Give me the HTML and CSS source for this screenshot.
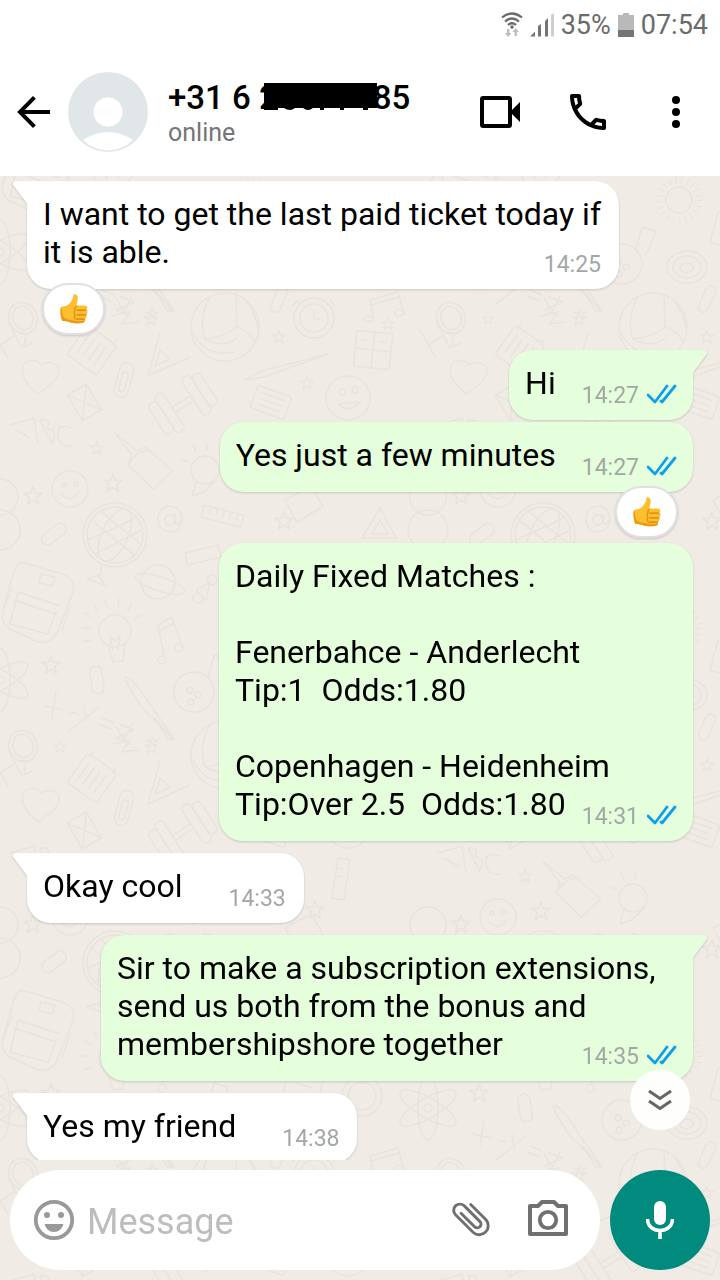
FILE: index.html
```html
<!DOCTYPE html>
<html lang="en">
  <head>
    <meta charset="UTF-8" />
    <meta name="viewport" content="width=device-width, initial-scale=1.0" />
    <title>Chat</title>
    <link rel="stylesheet" href="styles.css" />
  </head>
  <body>
    <!-- shared shapes -->
    <svg class="defs" aria-hidden="true">
      <symbol id="ticks" viewBox="0 0 30 20">
        <path d="M1 11l7 7L20 2M14 17l1 1L28 2" fill="none" stroke="#0f9fe8" stroke-width="2.8" stroke-linecap="round" stroke-linejoin="round" />
      </symbol>
      <symbol id="thumb" viewBox="0 0 28 30">
        <path d="M1 13c3-.5 6-1 8-3 2.500-2.500 4-5 4.500-9 .3-1.500 3-1 3.800 1 1 2.500.2 6-1.300 9.500h8.500c3.500 0 3.600 3.500 1.300 4.300 2.600.9 2.200 4.200-.2 4.600 1.800 1 1.200 4-.9 4.400 1 1.700 0 4-2.700 4.200-5 .5-9 .3-12-.8-3-1-5-1.200-7.500-1.200C.5 24 0 16 1 13z" fill="#fdbf2d" />
        <path d="M1 13c-1 4-.5 11 1.500 14 2.500 0 4.500.2 7.500 1.200 3 1.100 7 1.300 12 .8 1.800-.1 2.900-1.200 3-2.400-5 1.200-9 .8-13-.4C8 25 4 25 3 22c-1-3-.8-6-2-9z" fill="#ec9a12" />
        <path d="M17 16.200h9M17 20.800h9M17 25.200h7.500" fill="none" stroke="#d9820c" stroke-width="1.300" stroke-linecap="round" />
        <path d="M16.500 12c-1.500 1.200-2 2.200-1.500 4-1.500 1.500-1.300 3.500 0 4.500-1 1.500-.8 3.200.5 4.500" fill="none" stroke="#e08e12" stroke-width="1.200" stroke-linecap="round" />
      </symbol>
      <symbol id="star" viewBox="-12 -12 24 24" overflow="visible">
        <path d="M0-10l2.500 7 7.500.2-6 4.500L6 9 0 4.800-6 9l2-7.300-6-4.500 7.500-.2z" />
      </symbol>
    </svg>

    <!-- wallpaper -->
    <svg class="wallpaper" aria-hidden="true">
      <defs>
        <g id="doodles" fill="none" stroke="#e8e3dd" stroke-width="1.500" stroke-linejoin="round" stroke-linecap="round">
          <ellipse cx="23" cy="318" rx="14" ry="16" transform="rotate(-20 23 318)" />
          <ellipse cx="23" cy="318" rx="10" ry="12" transform="rotate(-20 23 318)" />
          <path d="M-8 330l16 28M8 322l14 26M0 345l14-9M20 333q8-2 5 6l-1 8 8-4" />
          <g transform="rotate(35 92 350)"><rect x="74" y="332" width="36" height="36" rx="3" /><path d="M81 340v20M88 340v20M95 340v20M102 340v20M78 328v6M106 328v6" /></g>
          <path d="M38 394C28 386 20 376 23 366c3-7 14-7 18-1 5-4 16-3 18 4 2 9-10 18-21 25z" />
          <path d="M160 333l-12 43 42-19M160 350l-5 16 15-7z" />
          <g transform="rotate(15 124 380)"><rect x="117" y="362" width="14" height="36" rx="7" /><rect x="121" y="372" width="6" height="20" rx="3" /></g>
          <circle cx="225" cy="327" r="34" /><path d="M210 297q-12 20-5 42 20-2 32-12l-1-33M237 327q10 2 18 14M205 339q18 10 32-1M193 333q14 25 40 19M247 302q8 10 11 26" />
          <path d="M245 380l16-9 67-17-64 23z" />
          <g transform="rotate(-33 183 404)"><path d="M173 401h20M173 407h20" /><rect x="162" y="382" width="10" height="44" rx="4" /><rect x="152" y="386" width="10" height="36" rx="4" /><rect x="194" y="382" width="10" height="44" rx="4" /><rect x="204" y="386" width="10" height="36" rx="4" /></g>
          <g transform="rotate(20 270 402)"><rect x="253" y="390" width="36" height="24" rx="3" /><path d="M260 396h22M260 402h22M260 408h22" /></g>
          <circle cx="348" cy="398" r="22" /><circle cx="342" cy="392" r="3" /><circle cx="355" cy="390" r="3" /><path d="M338 404q12 10 22-2z" />
          <g transform="rotate(-30 83 402)"><rect x="73" y="388" width="22" height="30" /><path d="M73 388l22 30M95 388l-22 30" /></g>
          <path d="M10 425l24-7 4 26M16 430l14 8M40 420l12 24M40 420q12-2 7 9 12 1 5 13M72 428q-16-5-14 8 2 12 14 10" />
          <path d="M115 433l22 18 8-4 28 24-20 18-25-24 4-10zM128 465q8-14 20-15" />
          <circle cx="70" cy="489" r="18" /><circle cx="64" cy="485" r="2" /><circle cx="76" cy="484" r="2" /><path d="M61 494q9 10 18-2" />
          <circle cx="115" cy="535" r="32" /><circle cx="115" cy="535" r="28" /><ellipse cx="115" cy="535" rx="13" ry="28" transform="rotate(25 115 535)" /><path d="M91 520l42 34M100 511l42 34M88 540l48-22M95 554l47-24M101 566v8l-14 5 18 6-6-9" />
          <ellipse cx="170" cy="519" rx="12" ry="13" /><circle cx="170" cy="520" r="5" /><path d="M175 514v9q4 3 6-3" />
          <g transform="rotate(14 222 516)"><rect x="202" y="510" width="41" height="12" /><path d="M209 510v6M216 510v6M223 510v6M230 510v6M237 510v6" /></g>
          <circle cx="0" cy="530" r="20" />
          <rect x="40" y="528" width="28" height="12" rx="6" transform="rotate(-38 54 534)" />
          <circle cx="205" cy="470" r="14" /><path d="M196 482l-4 14 12-4 12-12M188 462l-6-3M196 452l-3-7M207 450v-7" />
          <circle cx="314" cy="318" r="20" /><circle cx="314" cy="318" r="14" /><path d="M298 300l-6 6M330 300l5 6M314 310v9h7" />
          <rect x="274" y="285" width="10" height="28" rx="5" transform="rotate(24 279 299)" />
          <g transform="rotate(6 373 350)"><rect x="355" y="332" width="36" height="36" rx="2" /><path d="M355 350h36M373 332v36M361 341h5M380 341h5" /></g>
          <path d="M370 300l28-8 6 22q-8 5-10-2 4-5 10 0M370 300l4 20q-8 4-10-2 4-4 10 0M370 305l29-8" />
          <path d="M155 290l18 22-6-2zM116 298l8 14 8-16M112 316l18-4-8 12 16-2" />
          <path d="M22 562l40 12q14 4 11 18l-15 38q-5 14-20 12L12 630Q0 626 3 610l10-36q3-10 9-12zM18 592l42 14M14 600l42 14M18 592l-8 32 38 10 8-22M41 574l14 3-3 9-13-3zM12 588l-8 20M70 606l-8 24" />
          <ellipse cx="158" cy="582" rx="17" ry="17" /><ellipse cx="160" cy="584" rx="26" ry="7" transform="rotate(18 160 584)" />
          <circle cx="115" cy="631" r="16" /><path d="M108 645l5 17 10-1 2-17M113 650l-3-14 5 5 5-5-2 14M91 617l-6-4M97 610l-3-6M107 607l-2-7M118 606l1-7M128 610l4-6M135 619l7-4M90 628h-8M91 640l-8 2" />
          <path d="M158 625l14-8 10 30M158 625l6 32M158 632l16-9" /><circle cx="162" cy="660" r="4" /><circle cx="179" cy="648" r="4" />
          <ellipse cx="0" cy="680" rx="10" ry="32" /><ellipse cx="0" cy="680" rx="10" ry="32" transform="rotate(60 0 680)" /><ellipse cx="0" cy="680" rx="10" ry="32" transform="rotate(-60 0 680)" /><circle cx="0" cy="680" r="4" />
          <rect x="91" y="666" width="12" height="28" rx="6" transform="rotate(-8 97 680)" />
          <path d="M125 677q8 0 24 26l25 36-31-30q-16-22-18-32z" />
          <path d="M45 706l18 4M56 692l-4 26M70 712l8 2M84 706l2 14M98 708l-30 24M102 718l12 5M99 724l12 5M120 724l14 6-18 8 14 6" />
          <circle cx="194" cy="692" r="20" /><circle cx="190" cy="690" r="3" /><circle cx="198" cy="695" r="3" /><circle cx="191" cy="702" r="3" /><path d="M208 677l6-22 14 4-10 24" />
          <circle cx="251" cy="628" r="13" /><circle cx="251" cy="628" r="20" stroke-dasharray="1 5" stroke-width="7" stroke-linecap="butt" />
          <ellipse cx="259" cy="695" rx="20" ry="16" /><ellipse cx="259" cy="695" rx="14" ry="11" /><path d="M266 697q-10 7-14 0 2-8 12-5z" />
          <path d="M185 553l33-8 3 12-33 8zM196 590l14-8-4 18z" /><circle cx="198" cy="598" r="5" /><circle cx="212" cy="580" r="5" />
          <path d="M380 508l-18 30h34zM380 520l-8 14h16z" /><circle cx="428" cy="497" r="18" />
          <path d="M338 430l12 2-6 40-12-2zM338 440l5 1M337 448l5 1" /><path d="M285 500l26-14 12 20-26 16z" />
          <circle cx="362" cy="668" r="20" /><circle cx="362" cy="668" r="14" />
          <path d="M290 640l34 10-8 30-34-10zM296 655l16 5M400 590l14-20 12 24zM310 560q20-18 34 4l-17 22z" />
          <g stroke-width="1.800">
            <use href="#star" x="143" y="311" width="16" height="16" /><use href="#star" x="271" y="329" width="16" height="16" />
            <use href="#star" x="299" y="375" width="16" height="16" /><use href="#star" x="89" y="440" width="16" height="16" />
            <use href="#star" x="22" y="485" width="22" height="22" /><use href="#star" x="102" y="472" width="22" height="22" />
            <use href="#star" x="273" y="510" width="22" height="22" /><use href="#star" x="304" y="471" width="22" height="22" />
            <use href="#star" x="40" y="654" width="22" height="22" /><use href="#star" x="381" y="317" width="14" height="14" />
            <use href="#star" x="53" y="740" width="14" height="14" /><use href="#star" x="145" y="735" width="14" height="14" />
          </g>
        </g>
        <pattern id="tile" width="428" height="428" patternUnits="userSpaceOnUse">
          <use href="#doodles" /><use href="#doodles" x="428" /><use href="#doodles" x="-428" />
          <use href="#doodles" y="-428" /><use href="#doodles" x="428" y="-428" /><use href="#doodles" x="-428" y="-428" />
        </pattern>
      </defs>
      <rect width="100%" height="100%" fill="url(#tile)" />
    </svg>

    <div class="app">
      <!-- phone status bar -->
      <div class="status-bar">
        <svg class="wifi" viewBox="0 0 22 26" aria-hidden="true">
          <path d="M1 5.500q10-8 20 0M4 9.500q7-6 14 0M7 13q4-3.500 8 0" fill="none" stroke="#6b6b6b" stroke-width="2.200" />
          <circle cx="11" cy="15" r="1.800" fill="#6b6b6b" />
          <path d="M6 17v4H4l3.200 4 3.200-4h-2v-4zM13.500 24v-4h-2l3.200-4 3.200 4h-2v4z" fill="#bdbdbd" />
        </svg>
        <svg class="signal" viewBox="0 0 24 24" aria-hidden="true">
          <path d="M0 23.500l5-5v5zM8 23.500V13l3-2v12.500zM15 23.500V8l3-3v18.500z" fill="#757575" />
          <path d="M21 23.500V2l3-2v23.500z" fill="#cfcfcf" />
        </svg>
        <span>35%</span>
        <svg class="battery" viewBox="0 0 16 24" aria-hidden="true">
          <path d="M5 0h6v2h5v22H0V2h5z" fill="#b9b9b9" />
          <path d="M0 17h16v7H0z" fill="#757575" />
        </svg>
        <span>07:54</span>
      </div>

      <header class="chat-header">
        <button type="button" class="icon-btn" aria-label="Back">
          <svg viewBox="0 0 24 24"><path d="M20 12H5.500M12.200 4.700L5 12l7.200 7.300" fill="none" stroke="#000" stroke-width="2" /></svg>
        </button>
        <svg class="avatar" viewBox="0 0 80 80" aria-hidden="true">
          <circle cx="40" cy="40" r="40" fill="#e1e6e9" />
          <circle cx="40" cy="40" r="14.500" fill="#fff" />
          <path d="M15 68q25-16 50 0-11 10.500-25 10.500T15 68z" fill="#fff" />
        </svg>
        <div class="contact">
          <h1 class="contact-name">+31 6 2<svg class="redacted" viewBox="0 0 113 28" aria-hidden="true"><path d="M0 0h113v25h-9v2h-5v-2H80v2h-4v-2H60v2h-4v-2h-7q-5 4-10 0h-8q-5 4-11 0h-6v2H0z" /></svg>85</h1>
          <p class="contact-status">online</p>
        </div>
        <div class="actions">
          <button type="button" class="icon-btn" aria-label="Video call">
            <svg viewBox="0 0 24 24"><rect x="3" y="5" width="14" height="14" rx=".6" fill="none" stroke="#000" stroke-width="2" /><path d="M18 11l4-4v10l-4-4z" /></svg>
          </button>
          <button type="button" class="icon-btn" aria-label="Call">
            <svg viewBox="0 0 24 24"><path d="M6.540 5c.06.89.21 1.760.45 2.590l-1.200 1.200c-.41-1.200-.67-2.470-.76-3.790h1.510m9.860 12.020c.85.24 1.720.39 2.600.45v1.490c-1.320-.09-2.590-.35-3.800-.75l1.200-1.190M7.500 3H4c-.55 0-1 .45-1 1 0 9.390 7.610 17 17 17 .55 0 1-.45 1-1v-3.490c0-.55-.45-1-1-1-1.240 0-2.450-.2-3.570-.57-.1-.04-.21-.05-.31-.05-.26 0-.51.1-.71.29l-2.200 2.200c-2.830-1.450-5.150-3.760-6.590-6.590l2.200-2.200c.28-.28.36-.67.25-1.020C8.700 6.450 8.500 5.250 8.500 4c0-.55-.45-1-1-1z" /></svg>
          </button>
          <button type="button" class="icon-btn" aria-label="More options">
            <svg viewBox="0 0 24 24"><circle cx="12" cy="6" r="2" /><circle cx="12" cy="12" r="2" /><circle cx="12" cy="18" r="2" /></svg>
          </button>
        </div>
      </header>

      <div class="chat-area">
        <main class="messages">
          <div class="message received tail has-reaction">
            I want to get the last paid ticket today if it is able.
            <span class="meta"><time>14:25</time></span>
            <span class="reaction" role="img" aria-label="Thumbs up"><svg><use href="#thumb" /></svg></span>
          </div>

          <div class="message sent tail first">
            Hi
            <span class="meta"><time>14:27</time><svg class="ticks"><use href="#ticks" /></svg></span>
          </div>

          <div class="message sent has-reaction">
            Yes just a few minutes
            <span class="meta"><time>14:27</time><svg class="ticks"><use href="#ticks" /></svg></span>
            <span class="reaction" role="img" aria-label="Thumbs up"><svg><use href="#thumb" /></svg></span>
          </div>

          <div class="message sent long">
            Daily Fixed Matches :<br />
            <br />
            Fenerbahce - Anderlecht<br />
            Tip:1&nbsp; Odds:1.80<br />
            <br />
            Copenhagen - Heidenheim<br />
            Tip:Over 2.5&nbsp; Odds:1.80
            <span class="meta"><time>14:31</time><svg class="ticks"><use href="#ticks" /></svg></span>
          </div>

          <div class="message received tail first">
            Okay cool
            <span class="meta"><time>14:33</time></span>
          </div>

          <div class="message sent tail first">
            Sir to make a subscription extensions, send us both from the bonus and membershipshore together
            <span class="meta"><time>14:35</time><svg class="ticks"><use href="#ticks" /></svg></span>
          </div>

          <div class="message received tail first">
            Yes my friend
            <span class="meta"><time>14:38</time></span>
          </div>
        </main>

        <button type="button" class="scroll-down" aria-label="Scroll to bottom">
          <svg viewBox="0 0 24 20"><path d="M1 1l11 7.500L23 1M1 11l11 7.500L23 11" fill="none" stroke="#666" stroke-width="3" /></svg>
        </button>
      </div>

      <form class="composer">
        <div class="composer-box">
          <button type="button" class="icon-btn" aria-label="Emoji">
            <svg viewBox="0 0 24 24"><circle cx="12" cy="12" r="9.100" fill="none" stroke="#999" stroke-width="1.900" /><circle cx="8.500" cy="9.500" r="1.500" fill="#999" /><circle cx="15.500" cy="9.500" r="1.500" fill="#999" /><path d="M7.300 14h9.400c-.6 2.400-2.400 4-4.700 4s-4.100-1.600-4.700-4z" fill="#999" /></svg>
          </button>
          <input type="text" class="composer-input" placeholder="Message" aria-label="Message" />
          <button type="button" class="icon-btn" aria-label="Attach">
            <svg viewBox="0 0 48 48"><path d="M23.700 8.500L39 23.800A9 9 0 0 1 26.300 36.500L8.500 18.700A6.200 6.200 0 0 1 17.300 9.900L33 25.600A3.750 3.750 0 0 1 27.700 30.900L14 17.200" fill="none" stroke="#707070" stroke-width="2.900" stroke-linecap="round" /></svg>
          </button>
          <button type="button" class="icon-btn" aria-label="Camera">
            <svg viewBox="0 0 48 48"><path d="M6 10h8l4-4h12l4 4h8v28H6z" fill="none" stroke="#707070" stroke-width="4" stroke-linejoin="round" /><circle cx="24" cy="24" r="8.200" fill="none" stroke="#707070" stroke-width="3.800" /></svg>
          </button>
        </div>
        <button type="button" class="mic-btn" aria-label="Record voice message">
          <svg viewBox="0 0 28 38"><rect x="8" y="0" width="12" height="24" rx="6" fill="#fff" /><path d="M1.500 18c0 7 5.500 11.500 12.500 11.500S26.500 25 26.500 18M14 29v9" fill="none" stroke="#fff" stroke-width="3.600" /></svg>
        </button>
      </form>
    </div>
  </body>
</html>
```

FILE: styles.css
```css
* {
  box-sizing: border-box;
}

body {
  margin: 0;
  background-color: #f0ebe5;
  font-family: Roboto, "Liberation Sans", sans-serif;
  color: #000;
}

button {
  padding: 0;
  border: none;
  background: none;
  cursor: pointer;
}

svg {
  display: block;
}

.defs {
  position: absolute;
  width: 0;
  height: 0;
}

/* doodle pattern behind everything */
.wallpaper {
  position: fixed;
  top: 0;
  left: 0;
  width: 100%;
  height: 100%;
}

.app {
  position: relative;
  display: flex;
  flex-direction: column;
  height: 100vh;
}

/* status bar */
.status-bar {
  display: flex;
  align-items: center;
  justify-content: flex-end;
  gap: 7px;
  height: 48px;
  padding: 2px 12px 0 0;
  background-color: #fff;
  color: #6b6b6b;
  font-size: 27px;
}

.wifi {
  width: 22px;
  height: 26px;
}

.signal {
  width: 24px;
  height: 24px;
}

.battery {
  width: 16px;
  height: 24px;
}

/* header */
.chat-header {
  display: flex;
  align-items: center;
  height: 128px;
  padding: 0 20px 0 10px;
  background-color: #fff;
}

.icon-btn {
  flex: none;
  width: 48px;
  height: 48px;
}

.icon-btn svg {
  width: 100%;
  height: 100%;
}

.avatar {
  flex: none;
  width: 80px;
  height: 80px;
  margin: 0 20px 0 10px;
}

.contact {
  flex: 1;
  padding-top: 4px;
}

.contact-name {
  margin: 0;
  font-size: 33px;
  font-weight: 500;
  line-height: 38px;
  white-space: nowrap;
}

/* black bar over part of the number */
.redacted {
  display: inline-block;
  width: 113px;
  height: 28px;
  margin: 0 -4px 0 -14px;
  vertical-align: -2px;
}

.contact-status {
  margin: 0;
  font-size: 25px;
  line-height: 32px;
  color: #757575;
}

.actions {
  display: flex;
  gap: 40px;
}

/* messages */
.chat-area {
  position: relative;
  flex: 1;
  min-height: 0;
}

.messages {
  display: flex;
  flex-direction: column;
  gap: 2px;
  height: 100%;
  padding: 5px 27px 0;
  overflow: hidden;
}

.message {
  position: relative;
  flex: none;
  max-width: calc(100% - 74px);
  padding: 14px 16px 18px;
  border-radius: 24px;
  font-size: 32px;
  line-height: 38px;
  filter: drop-shadow(0 1px 1px rgba(0, 0, 0, 0.16));
}

.received {
  align-self: flex-start;
  padding-right: 18px;
  background-color: #fff;
}

.sent {
  align-self: flex-end;
  background-color: #e5fedb;
}

.first {
  margin-top: 10px;
}

.has-reaction {
  margin-bottom: 49px;
}

.received.tail {
  border-top-left-radius: 0;
}

.sent.tail {
  border-top-right-radius: 0;
}

.tail::before {
  content: "";
  position: absolute;
  top: 0;
  width: 15px;
  height: 24px;
  background-color: inherit;
  clip-path: path("M15 0H3C0 0 -1 3 1 5L15 24Z");
}

.received.tail::before {
  left: -14px;
}

.sent.tail::before {
  right: -14px;
  transform: scaleX(-1);
}

/* time and ticks hang a little below the last line */
.meta {
  float: right;
  display: flex;
  align-items: center;
  gap: 8px;
  margin: 18px 0 -8px 26px;
  font-size: 23px;
  line-height: 28px;
  color: #a2a8a6;
}

.received .meta {
  margin-left: 46px;
}

.long .meta {
  margin-left: 16px;
}

.ticks {
  width: 30px;
  height: 20px;
  margin-bottom: 4px;
}

.reaction {
  position: absolute;
  top: calc(100% - 6px);
  left: 15px;
  display: flex;
  align-items: center;
  justify-content: center;
  width: 63px;
  height: 52px;
  border: 2px solid #e0e0e2;
  border-radius: 26px;
  background-color: #fff;
}

.sent .reaction {
  left: auto;
  right: 15px;
}

.reaction svg {
  width: 28px;
  height: 30px;
}

.scroll-down {
  position: absolute;
  right: 30px;
  bottom: 30px;
  display: flex;
  align-items: center;
  justify-content: center;
  width: 60px;
  height: 60px;
  border-radius: 50%;
  background-color: rgba(255, 255, 255, 0.92);
}

.scroll-down svg {
  width: 24px;
  height: 20px;
}

/* message box */
.composer {
  display: flex;
  gap: 10px;
  padding: 10px;
}

.composer-box {
  flex: 1;
  display: flex;
  align-items: center;
  gap: 29px;
  min-width: 0;
  height: 100px;
  padding: 0 28px 0 20px;
  border-radius: 50px;
  background-color: #fff;
}

.composer-input {
  flex: 1;
  min-width: 0;
  margin-left: -20px;
  padding: 4px 0 0;
  border: none;
  outline: none;
  background: none;
  font-family: inherit;
  font-size: 36px;
  color: #000;
}

.composer-input::placeholder {
  color: #bdbdbd;
  opacity: 1;
}

.mic-btn {
  flex: none;
  display: flex;
  align-items: center;
  justify-content: center;
  width: 100px;
  height: 100px;
  border-radius: 50%;
  background-color: #018a7e;
}

.mic-btn svg {
  width: 28px;
  height: 38px;
}
```
